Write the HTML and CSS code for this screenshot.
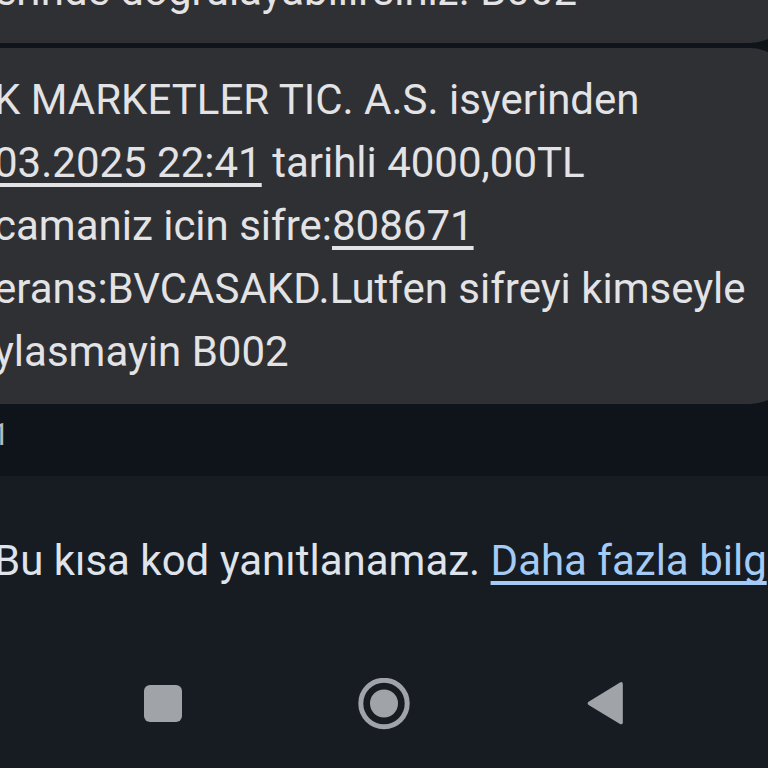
FILE: index.html
```html
<!DOCTYPE html>
<html lang="tr">
<head>
    <meta charset="UTF-8">
    <meta name="viewport" content="width=device-width, initial-scale=1.0">
    <title>Mesajlar</title>

    <link rel="stylesheet" href="styles.css">
</head>
<body>

    <main class="conversation">
        <div class="bubble">
            <p>erinde dogrulayabilirsiniz. B002</p>
        </div>

        <div class="bubble">
            <p>
                K MARKETLER TIC. A.S. isyerinden<br>
                <a href="#">03.2025 22:41</a> tarihli 4000,00TL<br>
                camaniz icin sifre:<a href="#">808671</a><br>
                erans:BVCASAKD.Lutfen sifreyi kimseyle<br>
                ylasmayin B002
            </p>
        </div>

        <div class="time">1</div>
    </main>

    <footer class="footer">
        <p class="notice">Bu kısa kod yanıtlanamaz. <a href="#">Daha fazla bilg</a></p>

        <!-- Android navigation bar -->
        <nav class="nav-bar">
            <button type="button" aria-label="Son uygulamalar">
                <svg width="52" height="52" viewBox="0 0 52 52">
                    <rect x="7" y="7" width="38" height="37" rx="6" />
                </svg>
            </button>
            <button type="button" aria-label="Ana ekran">
                <svg width="52" height="52" viewBox="0 0 52 52">
                    <circle class="ring" cx="26" cy="25.5" r="23.2" />
                    <circle cx="26" cy="25.5" r="14" />
                </svg>
            </button>
            <button type="button" aria-label="Geri">
                <svg width="52" height="52" viewBox="0 0 52 52">
                    <path d="M9.6 23.8 L41 4.4 Q43.6 3.2 43.8 6 V44.4 Q43.6 47.2 41 46 L9.6 27 Q7.6 25.4 9.6 23.8 Z" />
                </svg>
            </button>
        </nav>
    </footer>

</body>
</html>
```

FILE: styles.css
```css
body {
    display: flex;
    flex-direction: column;
    height: 100vh;
    margin: 0;
    overflow: hidden;
    background-color: #171c23;
    font-family: Roboto, sans-serif;
    font-size: 42px;
    line-height: 63px;
    white-space: nowrap;
}

p {
    margin: 0;
}

/* Messages stay at the bottom, older ones run off the top */
.conversation {
    display: flex;
    flex: 1;
    flex-direction: column;
    justify-content: flex-end;
    gap: 5px;
    min-height: 0;
    overflow: hidden;
    background-color: #0f131a;
}

.bubble {
    flex-shrink: 0;
    margin: 0 -24px 0 -6px;
    padding: 20px 0 21px;
    border-radius: 0 42px 42px 0;
    background-color: #2f3033;
    color: #e3e3e6;
}

.bubble a,
.notice a {
    color: inherit;
    text-decoration: underline;
    text-decoration-thickness: 4px;
    text-decoration-skip-ink: none;
    text-underline-offset: 6px;
}

.time {
    margin-left: -8px;
    padding: 8px 0 23px;
    color: #b8bac2;
    font-size: 31px;
    line-height: 36px;
}

.footer {
    padding: 53px 0 38px;
    overflow: hidden;
}

.notice {
    margin-left: -6px;
    color: #dfe3ec;
}

.notice a {
    color: #a3cbf5;
}

.nav-bar {
    display: grid;
    grid-template-columns: repeat(3, 1fr);
    margin-top: 86px;
    padding: 0 52px;
}

.nav-bar button {
    display: flex;
    justify-content: center;
    padding: 0;
    border: none;
    background: none;
    cursor: pointer;
}

.nav-bar svg {
    fill: #a0a3a7;
}

.nav-bar .ring {
    fill: none;
    stroke: #a0a3a7;
    stroke-width: 5;
}
```
